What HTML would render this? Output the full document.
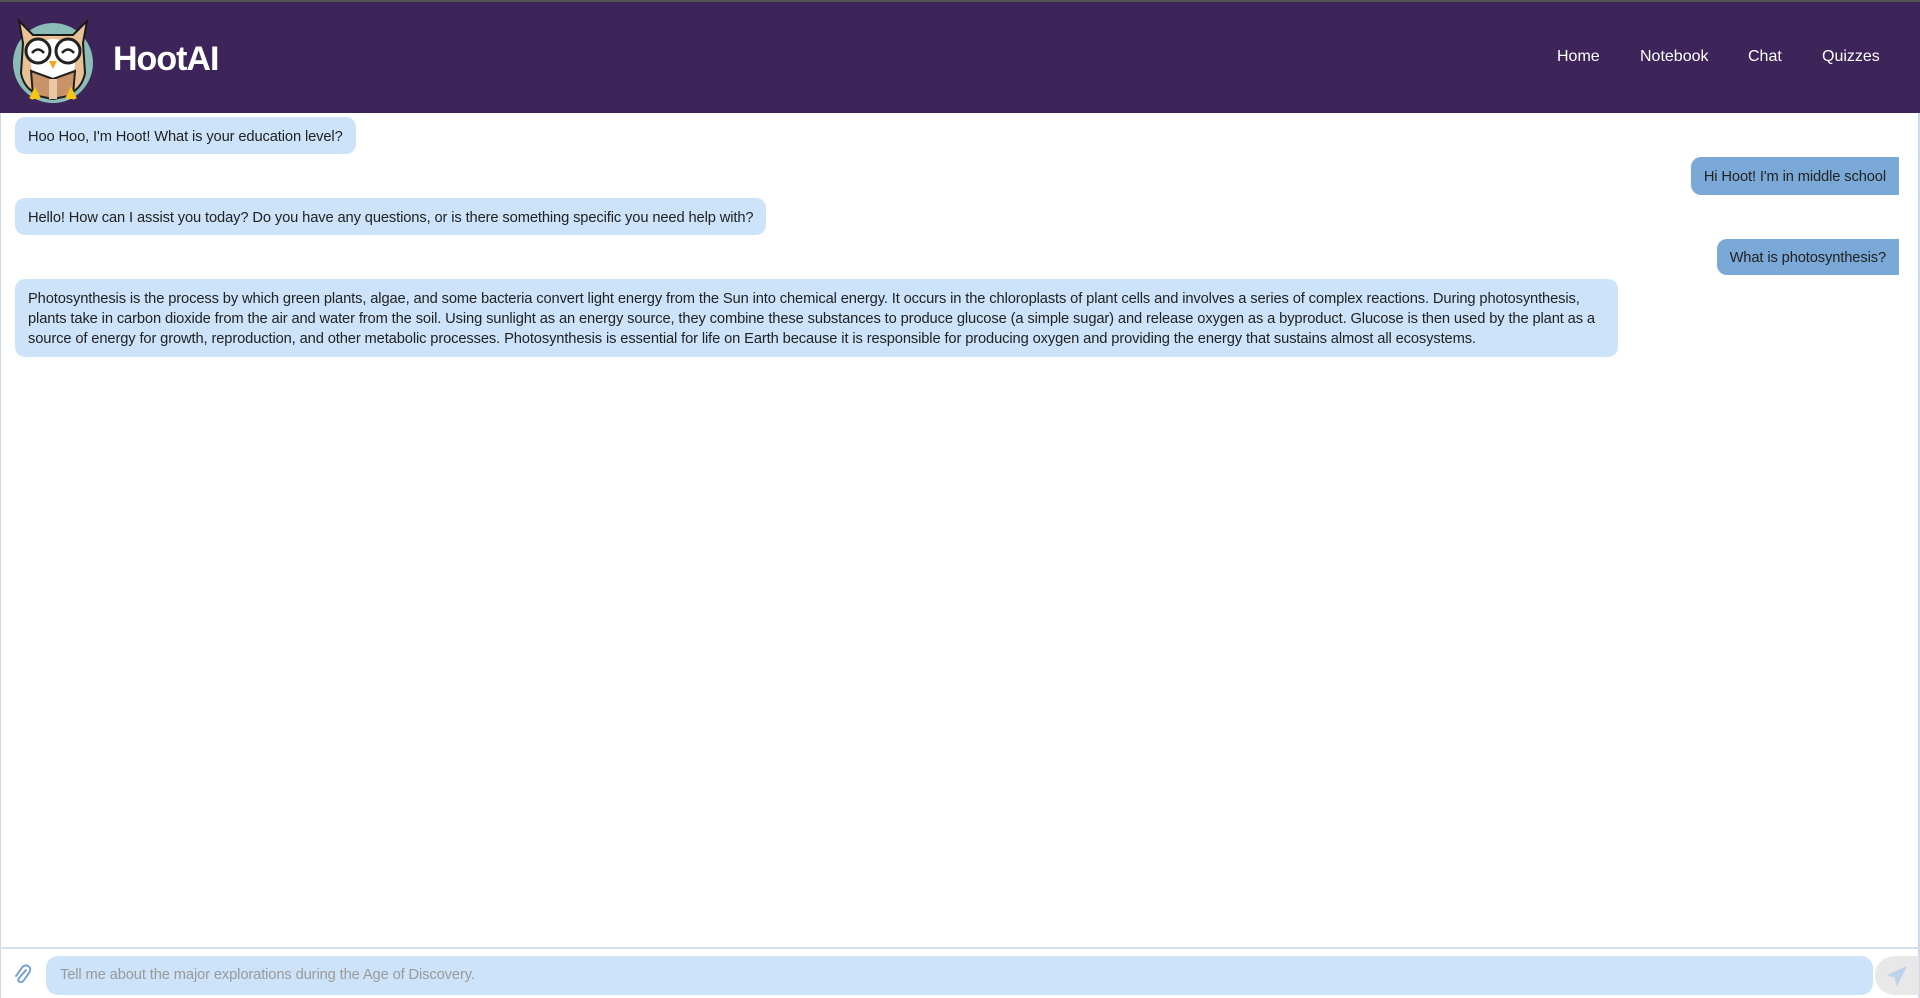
<!DOCTYPE html>
<html><head><meta charset="utf-8"><style>
*{margin:0;padding:0;box-sizing:border-box}
html,body{width:1920px;height:998px;overflow:hidden;background:#fff;font-family:"Liberation Sans",Arial,sans-serif}
.hdr{position:absolute;left:0;top:0;width:1920px;height:113px;background:#3d2459;border-top:2px solid #555}
.logo{position:absolute;left:11px;top:11px;width:84px;height:92px}
.title{position:absolute;left:113px;top:38px;color:#fff;font-size:34px;font-weight:bold;letter-spacing:-1px}
.nav{position:absolute;top:46px;color:#fff;font-size:16px}
.chat{position:absolute;left:0;top:113px;width:1920px;height:835px;border-left:1px solid #cdd9e6;border-right:2px solid #cdd9e6}
.b{position:absolute;font-size:14.7px;color:#222;padding:0 13px;line-height:20px;white-space:nowrap;letter-spacing:-0.12px}
.l{background:#cce3fa;border-radius:10px;left:14px}
.r{background:#7aa9d8;border-radius:10px 0 0 10px;right:19px}
.bot{position:absolute;left:0;top:947px;width:1920px;height:51px;border-top:2px solid #d5e0ea;border-left:1px solid #cdd9e6;border-right:2px solid #cdd9e6}
.inp{position:absolute;left:45px;top:7px;width:1827px;height:39px;background:#cce3fa;border-radius:12px;color:#9a9a9a;font-size:14.7px;line-height:39px;padding-left:14px;letter-spacing:-0.12px}
.send{position:absolute;left:1874px;top:7px;width:44px;height:39px;background:#e8e8e8;border-radius:20px 0 0 20px}
</style></head><body>
<div class="hdr">
<svg class="logo" viewBox="0 0 84 92">
<circle cx="42" cy="50" r="40" fill="#8cbcb8"/>
<path d="M8 8 L22 22 L62 22 L76 8 L72 30 L74 60 Q70 82 42 86 Q14 82 10 60 L12 30Z" fill="#e8c196" stroke="#1a1a1a" stroke-width="2"/>
<ellipse cx="42" cy="50" rx="22" ry="24" fill="#fff"/>
<circle cx="27" cy="38" r="12" fill="#fff" stroke="#222" stroke-width="3"/>
<circle cx="57" cy="38" r="12" fill="#fff" stroke="#222" stroke-width="3"/>
<path d="M21 40 Q27 33 33 40 M51 40 Q57 33 63 40" stroke="#222" stroke-width="2.5" fill="none"/>
<path d="M38 48 L46 48 L42 56Z" fill="#f2a81d"/>
<path d="M20 58 L42 66 L64 58 L62 82 L42 86 L22 82Z" fill="#c9936a" stroke="#222" stroke-width="2"/>
<rect x="38" y="66" width="8" height="20" fill="#e8c6a6"/>
<path d="M20 86 l4 -8 l4 8 M56 86 l4 -8 l4 8" fill="#f5c518" stroke="#f5c518" stroke-width="4"/>
</svg>
<div class="title">HootAI</div>
<div class="nav" style="left:1557px">Home</div>
<div class="nav" style="left:1640px">Notebook</div>
<div class="nav" style="left:1748px">Chat</div>
<div class="nav" style="left:1822px">Quizzes</div>
</div>
<div class="chat">
<div class="b l" style="top:4px;padding-top:10px;padding-bottom:7px">Hoo Hoo, I'm Hoot! What is your education level?</div>
<div class="b r" style="top:44px;padding-top:10px;padding-bottom:8px">Hi Hoot! I'm in middle school</div>
<div class="b l" style="top:85px;padding-top:10px;padding-bottom:7px">Hello! How can I assist you today? Do you have any questions, or is there something specific you need help with?</div>
<div class="b r" style="top:126px;padding-top:9px;padding-bottom:7px">What is photosynthesis?</div>
<div class="b l" style="top:166px;padding-top:10px;padding-bottom:8px;width:1603px">Photosynthesis is the process by which green plants, algae, and some bacteria convert light energy from the Sun into chemical energy. It occurs in the chloroplasts of plant cells and involves a series of complex reactions. During photosynthesis,<br>plants take in carbon dioxide from the air and water from the soil. Using sunlight as an energy source, they combine these substances to produce glucose (a simple sugar) and release oxygen as a byproduct. Glucose is then used by the plant as a<br>source of energy for growth, reproduction, and other metabolic processes. Photosynthesis is essential for life on Earth because it is responsible for producing oxygen and providing the energy that sustains almost all ecosystems.</div>
</div>
<div class="bot">
<svg style="position:absolute;left:13px;top:15px" width="18" height="22" viewBox="0 0 18 22"><path d="M12 6 L5 14 Q3 17 6 18 Q8 19 10 16 L15 9 Q18 4 14 2 Q10 0 7 5 L2 12" stroke="#6a9bd4" stroke-width="1.8" fill="none" stroke-linecap="round"/></svg>
<div class="inp">Tell me about the major explorations during the Age of Discovery.</div>
<div class="send"><svg style="position:absolute;left:12px;top:10px" width="20" height="20" viewBox="0 0 20 20"><path d="M19 1 L1 9 L8 11 L10 19Z M19 1 L8 11" fill="#bcd3ea" stroke="#bcd3ea" stroke-width="1"/></svg></div>
</div>
</body></html>
